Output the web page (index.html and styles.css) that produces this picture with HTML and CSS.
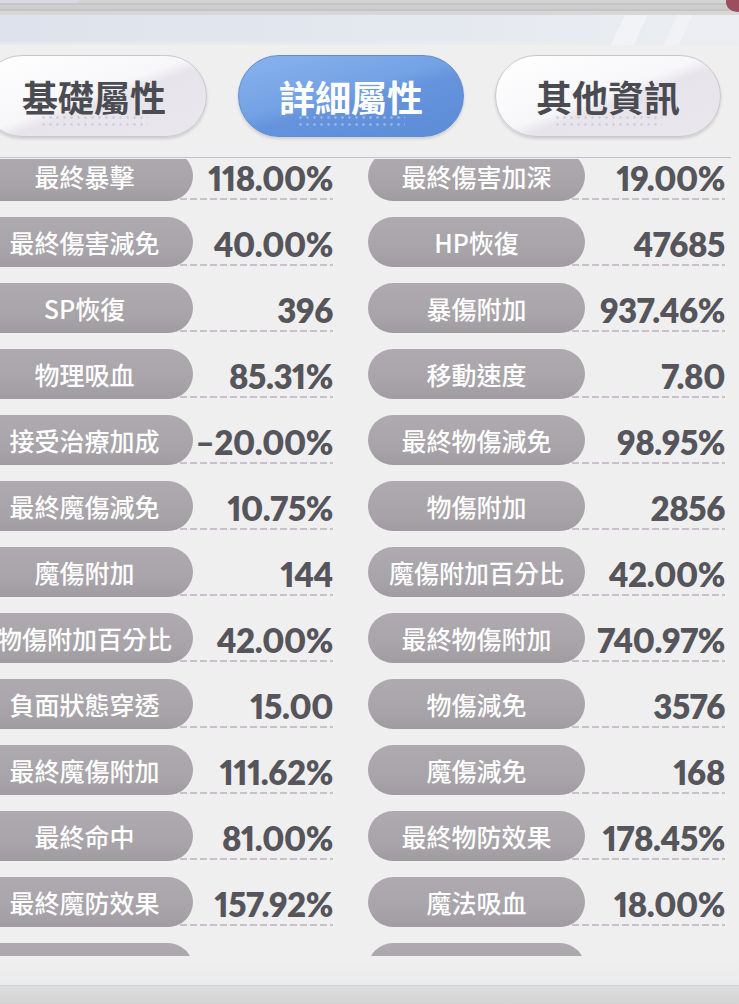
FILE: index.html
```html
<!DOCTYPE html>
<html lang="zh-Hant">
<head>
<meta charset="utf-8">
<title>詳細屬性</title>
<link rel="stylesheet" href="styles.css">
</head>
<body>
<div class="screen">
  <div class="topbar">
    <div class="top-strip"><span class="top-pill"></span><span class="top-dot"></span></div>
    <div class="top-glass"></div>
  </div>
  <div class="panel">
    <div class="tabs">
      <div class="tab">基礎屬性</div>
      <div class="tab active">詳細屬性</div>
      <div class="tab">其他資訊</div>
    </div>
    <div class="divider"></div>
    <div class="list">
      <div class="grid">
        <div class="row"><div class="label">最終暴擊</div><div class="value">118.00%</div></div>
        <div class="row"><div class="label">最終傷害加深</div><div class="value">19.00%</div></div>
        <div class="row"><div class="label">最終傷害減免</div><div class="value">40.00%</div></div>
        <div class="row"><div class="label">HP恢復</div><div class="value">47685</div></div>
        <div class="row"><div class="label">SP恢復</div><div class="value">396</div></div>
        <div class="row"><div class="label">暴傷附加</div><div class="value">937.46%</div></div>
        <div class="row"><div class="label">物理吸血</div><div class="value">85.31%</div></div>
        <div class="row"><div class="label">移動速度</div><div class="value">7.80</div></div>
        <div class="row"><div class="label">接受治療加成</div><div class="value">–20.00%</div></div>
        <div class="row"><div class="label">最終物傷減免</div><div class="value">98.95%</div></div>
        <div class="row"><div class="label">最終魔傷減免</div><div class="value">10.75%</div></div>
        <div class="row"><div class="label">物傷附加</div><div class="value">2856</div></div>
        <div class="row"><div class="label">魔傷附加</div><div class="value">144</div></div>
        <div class="row"><div class="label">魔傷附加百分比</div><div class="value">42.00%</div></div>
        <div class="row"><div class="label">物傷附加百分比</div><div class="value">42.00%</div></div>
        <div class="row"><div class="label">最終物傷附加</div><div class="value">740.97%</div></div>
        <div class="row"><div class="label">負面狀態穿透</div><div class="value">15.00</div></div>
        <div class="row"><div class="label">物傷減免</div><div class="value">3576</div></div>
        <div class="row"><div class="label">最終魔傷附加</div><div class="value">111.62%</div></div>
        <div class="row"><div class="label">魔傷減免</div><div class="value">168</div></div>
        <div class="row"><div class="label">最終命中</div><div class="value">81.00%</div></div>
        <div class="row"><div class="label">最終物防效果</div><div class="value">178.45%</div></div>
        <div class="row"><div class="label">最終魔防效果</div><div class="value">157.92%</div></div>
        <div class="row"><div class="label">魔法吸血</div><div class="value">18.00%</div></div>
        <div class="row"><div class="label"></div><div class="value"></div></div>
        <div class="row"><div class="label"></div><div class="value"></div></div>
      </div>
    </div>
    <div class="panel-foot"></div>
  </div>
  <div class="bottom"></div>
</div>
</body>
</html>
```

FILE: styles.css
```css
html, body {
  margin: 0;
  padding: 0;
  background: #efefef;
}
.screen {
  width: 739px;
  height: 1004px;
  overflow: hidden;
  display: flex;
  flex-direction: column;
  font-family: "Noto Sans CJK TC", "Noto Sans", sans-serif;
}
.topbar {
  height: 45px;
  flex: none;
  display: flex;
  flex-direction: column;
}
.top-strip {
  height: 15px;
  position: relative;
  overflow: hidden;
  background: linear-gradient(#d3d2d5 0 3px, #c6c6c7 3px 5px, #cecece 5px 9px, #c4c4c5 9px 11px, #d7d7d7 11px 15px);
}
.top-pill {
  position: absolute;
  left: -10px;
  top: -7px;
  width: 90px;
  height: 10px;
  border-radius: 6px;
  background: #dcd8e3;
}
.top-dot {
  position: absolute;
  right: -9px;
  top: -8px;
  width: 22px;
  height: 20px;
  border-radius: 50%;
  background: #9c4d5e;
}
.top-glass {
  flex: 1;
  background:
    linear-gradient(115deg, transparent 0 83%, rgba(255,255,255,.35) 83% 86%, transparent 86% 90%, rgba(255,255,255,.3) 90% 92%, transparent 92%),
    linear-gradient(180deg, rgba(255,255,255,0) 85%, #ececec 100%),
    linear-gradient(90deg, #dde2ec 0%, #e4e8ef 55%, #eceef2 100%);
}
.panel {
  flex: 1;
  display: flex;
  flex-direction: column;
  background: #efefef;
}
.tabs {
  height: 82px;
  padding-top: 10px;
  margin-left: -19px;
  display: flex;
  gap: 31px;
}
.tab {
  flex: none;
  width: 226px;
  height: 82px;
  box-sizing: border-box;
  border-radius: 41px;
  border: 1.5px solid #c8c7cc;
  background: linear-gradient(160deg, #ffffff 0%, #f7f6f9 48%, #e7e5eb 56%, #e9e7ed 100%);
  box-shadow: 0 2px 3px rgba(0,0,0,.14);
  color: #4b4b52;
  font-size: 36px;
  font-weight: 700;
  display: flex;
  align-items: center;
  justify-content: center;
  position: relative;
}
.tab::after {
  content: "";
  position: absolute;
  left: 26%;
  right: 26%;
  bottom: 8px;
  height: 14px;
  background: radial-gradient(circle, rgba(205,203,215,.8) 1px, transparent 1.6px) 0 0 / 7px 7px;
}
.tab.active {
  border-color: #5f8ed4;
  background: linear-gradient(165deg, #8ab3ee 0%, #73a1e4 45%, #6593dc 56%, #5d8cd8 100%);
  color: #ffffff;
}
.tab.active::after {
  background: radial-gradient(circle, rgba(150,185,235,.9) 1px, transparent 1.6px) 0 0 / 7px 7px;
}
.divider {
  height: 1px;
  margin-top: 20px;
  width: 731px;
  background: #c3c3cb;
}
.list {
  height: 797px;
  margin-top: 1px;
  overflow: hidden;
  flex: none;
}
.grid {
  display: grid;
  grid-template-columns: 357px 357px;
  grid-auto-rows: 50px;
  column-gap: 35px;
  row-gap: 16px;
  margin: -8px 0 0 -24px;
}
.row {
  display: flex;
  height: 50px;
}
.label {
  flex: none;
  width: 217px;
  border-radius: 25px;
  background: linear-gradient(180deg, #aeaaaf 0%, #a7a3a8 70%, #9f9ba1 100%);
  color: #ffffff;
  font-size: 25px;
  font-weight: 500;
  display: flex;
  align-items: center;
  justify-content: center;
  white-space: nowrap;
  position: relative;
  z-index: 1;
}
.value {
  flex: 1;
  margin-left: -23px;
  padding-top: 4px;
  display: flex;
  align-items: center;
  justify-content: flex-end;
  font-family: "Lato", "Open Sans", sans-serif;
  font-variant-numeric: proportional-nums;
  font-weight: 800;
  font-size: 33px;
  letter-spacing: -0.4px;
  line-height: 1;
  color: #55555b;
  background: repeating-linear-gradient(90deg, #c9c0cb 0 7px, transparent 7px 10px) left bottom 1px / 100% 2px no-repeat;
}
.panel-foot {
  flex: 1;
  background: linear-gradient(#efefef, #ebebeb);
}
.bottom {
  height: 18px;
  flex: none;
  border-top: 1px solid #cdd5db;
  background: linear-gradient(#dedede, #d3d3d3);
}
```
